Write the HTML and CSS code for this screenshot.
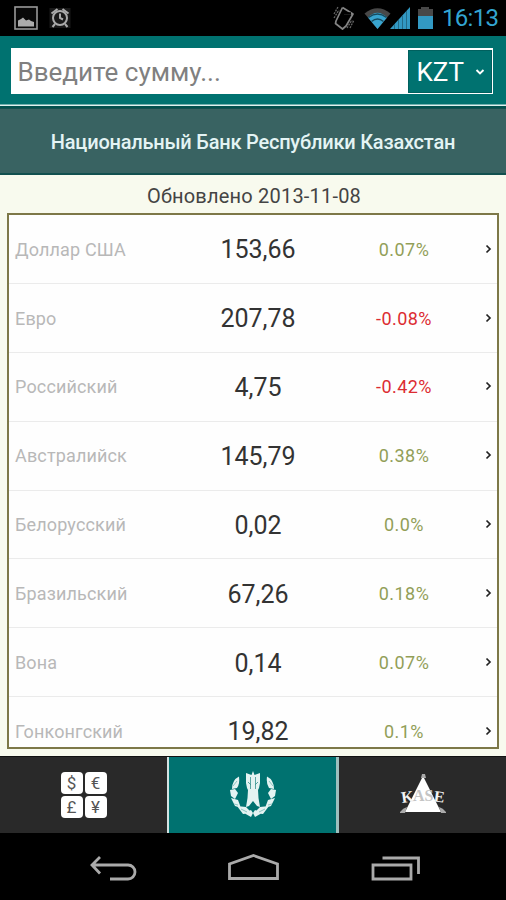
FILE: index.html
```html
<!DOCTYPE html>
<html lang="ru">
<head>
<meta charset="utf-8">
<title>Курсы валют</title>
<link rel="stylesheet" href="styles.css">
</head>
<body>
<div class="status">
  <svg width="72" height="36" viewBox="0 0 72 36">
    <rect x="15" y="7" width="22" height="22" fill="#080808" stroke="#999" stroke-width="1.6"/>
    <path d="M18 26.500V20.500l3-1.500 2-1.500 3 3 3-1 2 1.500 3 1v4.500z" fill="#aaa"/>
    <rect x="49.500" y="8" width="21" height="20" fill="#191919"/>
    <g fill="none" stroke="#aaa" stroke-width="2"><circle cx="60" cy="18" r="7"/><path d="M60 13.500V18l3 1.500M55 24l-2.500 3M65 24l2.500 3M51.500 13.500l6-4.500M68.500 13.500l-6-4.500"/></g>
  </svg>
  <div class="status-right">
    <svg width="106" height="36" viewBox="330 0 106 36">
      <path d="M342.500 7.500l10.500 6.500-9 0M353 14l-7 12-3.500 3-7-5.500 .5-2.500 6.500-13.500" fill="none" stroke="#858585" stroke-width="1.700" stroke-linejoin="round"/>
      <path d="M343 13.500h10" stroke="#000" stroke-width="2.500" stroke-dasharray="8 2"/>
      <path d="M334 14l4-7M334 18l5-8M350 28l4-8M347 28l5-8" stroke="#666" stroke-width="1.300" stroke-dasharray="2 1"/>
      <path d="M364.500 13.500Q377.500 3 390.500 13.500L377.500 29z" fill="#484848"/>
      <path d="M368 17.500Q377.500 8 387 17.500L377.500 29z" fill="#38a4cf"/>
      <path d="M368.500 17.500Q377.500 10.500 386.500 17.500M371.500 21.500Q377.500 16.500 383.500 21.500" fill="none" stroke="#17495d" stroke-width="1.500"/>
      <path d="M390 29L410 7v22z" fill="#3299c3"/>
      <path d="M394.500 24v5M398.500 20v9M402.500 15v14M406.500 11v18" stroke="#236b88" stroke-width="1"/>
      <path d="M418 9h3V7h8v2h4v9h-15z" fill="#484848"/>
      <path d="M418 16h15v13h-15z" fill="#3299c3"/>
    </svg>
    <span class="clock">16:13</span>
  </div>
</div>
<header class="amount-bar">
  <div class="amount"><span class="placeholder">Введите сумму...</span>
    <div class="currency"><span>KZT</span><svg width="10" height="8" viewBox="0 0 10 8"><path d="M1.500 2L5 5.500 8.500 2" fill="none" stroke="#fff" stroke-width="1.900"/></svg></div>
  </div>
</header>
<div class="bank"><span>Национальный Банк Республики Казахстан</span></div>
<main class="content">
  <div class="updated"><span>Обновлено 2013-11-08</span></div>
  <div class="rates">
    <div class="row"><span class="name">Доллар США</span><span class="value">153,66</span><span class="change">0.07%</span><svg class="chev" viewBox="0 0 7 10"><path d="M1.500 1.500L5 5 1.500 8.500"/></svg></div>
    <div class="row"><span class="name">Евро</span><span class="value">207,78</span><span class="change down">-0.08%</span><svg class="chev" viewBox="0 0 7 10"><path d="M1.500 1.500L5 5 1.500 8.500"/></svg></div>
    <div class="row"><span class="name">Российский</span><span class="value">4,75</span><span class="change down">-0.42%</span><svg class="chev" viewBox="0 0 7 10"><path d="M1.500 1.500L5 5 1.500 8.500"/></svg></div>
    <div class="row"><span class="name">Австралийск</span><span class="value">145,79</span><span class="change">0.38%</span><svg class="chev" viewBox="0 0 7 10"><path d="M1.500 1.500L5 5 1.500 8.500"/></svg></div>
    <div class="row"><span class="name">Белорусский</span><span class="value">0,02</span><span class="change">0.0%</span><svg class="chev" viewBox="0 0 7 10"><path d="M1.500 1.500L5 5 1.500 8.500"/></svg></div>
    <div class="row"><span class="name">Бразильский</span><span class="value">67,26</span><span class="change">0.18%</span><svg class="chev" viewBox="0 0 7 10"><path d="M1.500 1.500L5 5 1.500 8.500"/></svg></div>
    <div class="row"><span class="name">Вона</span><span class="value">0,14</span><span class="change">0.07%</span><svg class="chev" viewBox="0 0 7 10"><path d="M1.500 1.500L5 5 1.500 8.500"/></svg></div>
    <div class="row"><span class="name">Гонконгский</span><span class="value">19,82</span><span class="change">0.1%</span><svg class="chev" viewBox="0 0 7 10"><path d="M1.500 1.500L5 5 1.500 8.500"/></svg></div>
  </div>
</main>
<nav class="tabs">
  <div class="tab">
    <div class="coins"><span>$</span><span>€</span><span>£</span><span>¥</span></div>
  </div>
  <div class="tab active">
    <svg width="50" height="50" viewBox="0 0 50 50">
      <g fill="#e4f3f2">
        <path d="M11 6.500Q4 10 4 19l5-1q3-4 2-11.500zM2 20l5-1 3 4-3 6-4-3zM3 28l7 2 3 8-6-2zM9 36l9 1 6 6-9 1zM16 43l7-3 2 3-2 4z"/>
        <path d="M39 6.500Q46 10 46 19l-5-1q-3-4-2-11.500zM48 20l-5-1-3 4 3 6 4-3zM47 28l-7 2-3 8 6-2zM41 36l-9 1-6 6 9 1zM34 43l-7-3-2 3 2 4z"/>
        <path d="M25 1l1.500 4L32 3v10l-1 5-1 2 .5 8 1.500 9-3-1-4-5-4 5-3 1 1.500-9 .5-8-1-2-1-5V3l5.500 2z"/>
      </g>
      <path d="M22.500 7v12M27.500 7v12M20 12l3 3M30 12l-3 3" fill="none" stroke="#36918e" stroke-width=".8"/>
      <path d="M5 16l4-5M6 34l4 1M13 39l6 3M45 16l-4-5M44 34l-4 1M37 39l-6 3" fill="none" stroke="#8cc4c1" stroke-width="1"/>
    </svg>
  </div>
  <div class="tab">
    <svg width="50" height="50" viewBox="0 0 50 50">
      <path d="M25 6L43 42H7z" fill="#fff"/>
      <path d="M24 4h3l1 4h-5zM2 42q3-4 7-5l-2 6H2zM48 42q-3-4-7-5l2 6h5z" fill="#aaa"/>
      <g class="kase"><text x="3" y="32" transform="rotate(-8 10 26)">K</text><text x="15" y="31" class="mid">A</text><text x="26.500" y="31" class="mid">S</text><text x="36" y="32" transform="rotate(8 41 26)">E</text></g>
    </svg>
  </div>
</nav>
<footer class="system">
  <svg width="506" height="67" viewBox="0 833 506 67" fill="none" stroke="#aaa" stroke-width="2.800">
    <path d="M100 857l-8 8 8 8.500M92 865h36a7 7 0 0 1 0 14h-18"/>
    <path d="M229.500 878.500v-14.500l24-8.500 24 8.500v14.500z"/>
    <path d="M373 865h38v14h-38zM382.500 858h36v16"/>
  </svg>
</footer>
</body>
</html>
```

FILE: styles.css
```css
* { box-sizing: border-box; }
body { margin: 0; width: 506px; height: 900px; display: flex; flex-direction: column; overflow: hidden; background: #000; font-family: Roboto, "Liberation Sans", sans-serif; }
svg { display: block; flex: none; }
.status { height: 36px; display: flex; justify-content: space-between; background: #000; }
.status-right { display: flex; width: 176px; }
.clock { color: #33a5d2; font-size: 24px; line-height: 37px; padding-left: 6px; letter-spacing: -.7px; }
.amount-bar { height: 72px; padding: 12px 13px 0 11px; background: #007270; border-bottom: 2px solid #00504e; box-shadow: inset 0 -1.500px 0 #dff0ee; }
.amount { height: 46px; display: flex; justify-content: space-between; background: #fff; padding: 1.500px; }
.placeholder { color: #808080; font-size: 26px; line-height: 45px; padding-left: 5px; white-space: nowrap; }
.currency { width: 84px; display: flex; align-items: center; justify-content: space-between; padding: 2px 6px 0 8px; background: #007270; border: 1px solid #00605e; color: #fff; font-size: 26px; }
.bank { height: 67px; border-top: 1px solid #12504f; border-bottom: 2px solid #12504f; background: #396362; color: #e4f4f4; font-size: 20px; font-weight: 500; line-height: 67px; text-align: center; white-space: nowrap; letter-spacing: -.22px; }
.content { height: 581px; padding: 0 7px; background: #f8faee; }
.updated { height: 38px; padding-left: 2px; font-size: 20px; line-height: 43px; text-align: center; color: #444; letter-spacing: .2px; }
.rates { height: 536px; border: 2px solid #7d7848; background: #fefefe; overflow: hidden; }
.row { height: 68.900px; display: grid; grid-template-columns: 176px 144px 148px 1fr; align-items: center; padding: 1.500px 0 0 1px; border-bottom: 1.500px solid #ebebeb; line-height: 30px; }
.name { padding-left: 5px; color: #b8b8b8; font-size: 18px; white-space: nowrap; letter-spacing: .15px; }
.value { padding-top: 1px; color: #333; font-size: 25px; text-align: center; }
.change { color: #929e58; font-size: 18px; text-align: center; letter-spacing: .45px; }
.down { color: #dc2c32; }
.chev { width: 7px; height: 10px; margin: -2px 0 0 7px; fill: none; stroke: #222; stroke-width: 1.700; }
.tabs { height: 77px; display: grid; grid-template-columns: 167px 172px 167px; background: #000; border-top: 1px solid #111; }
.tab { display: flex; align-items: center; justify-content: center; background: #292929; }
.tab.active { background: #007270; border-left: 2px solid #d3e2e1; border-right: 3px solid #9ec0be; }
.coins { display: grid; grid-template-columns: 22px 22px; gap: 2px; }
.coins span { height: 22px; background: #fff; border-radius: 4px; color: #555; font-size: 17px; line-height: 23px; text-align: center; }
.kase { font-family: "Liberation Serif", serif; font-size: 16px; font-weight: bold; fill: #f4f4f4; }
.mid { fill: #c4c4c4; }
.system { height: 67px; background: #000; }
```
